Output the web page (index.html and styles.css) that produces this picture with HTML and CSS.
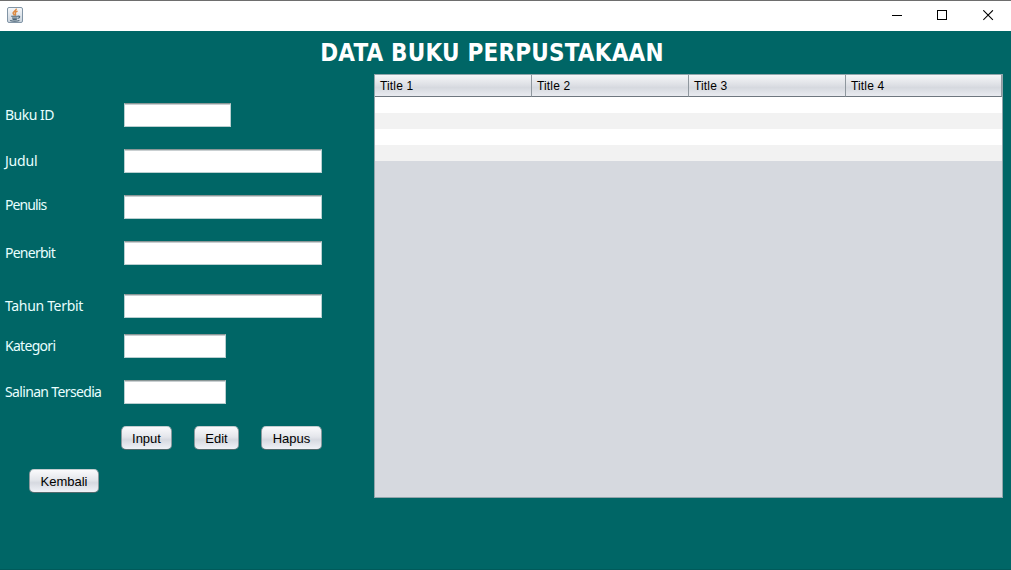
FILE: index.html
```html
<!DOCTYPE html>
<html lang="id">
<head>
<meta charset="utf-8">
<title>Data Buku Perpustakaan</title>
<link rel="stylesheet" href="styles.css">
</head>
<body>
<div class="window">
  <header class="titlebar">
    <svg class="app-icon" width="16" height="16" viewBox="0 0 16 16">
      <defs><linearGradient id="tile" x1="0" y1="0" x2="0" y2="1"><stop offset="0" stop-color="#f6f8fa"/><stop offset="1" stop-color="#c9d3dd"/></linearGradient></defs>
      <rect x=".5" y=".5" width="15" height="15" rx="1.5" fill="url(#tile)" stroke="#8295a6"/>
      <path d="M9.3 1.6C9.8 3.6 5.4 4.5 6.1 6.3 6.4 7.1 7.2 7.5 7.5 8.4M10.6 4.1C8.8 4.7 7.7 5.5 8.4 6.5 8.8 7.2 8.6 7.8 8.1 8.4" fill="none" stroke="#dd8a42" stroke-width="1.5"/>
      <path d="M4.2 9.3H10.8M5 11H10.2M5.6 12.4H9.8M10.8 9.3C13.6 8.4 13.2 11.1 10.6 11.4M3.2 13.4C5 14.4 10.5 14.4 12.4 13.4" fill="none" stroke="#4b6476" stroke-width="1.1"/>
    </svg>
    <div class="controls">
      <svg width="11" height="11" viewBox="0 0 11 11"><path d="M1 5.5H11" stroke="#000"/></svg>
      <svg width="11" height="11" viewBox="0 0 11 11"><rect x=".5" y=".5" width="9" height="9" fill="none" stroke="#000"/></svg>
      <svg width="11" height="11" viewBox="0 0 11 11"><path d="M.3 .3L9.9 9.9M9.9 .3L.3 9.9" stroke="#000" stroke-width="1.1"/></svg>
    </div>
  </header>
  <main class="panel">
    <h1 class="heading">DATA BUKU PERPUSTAKAAN</h1>
    <div class="columns">
      <form class="form">
        <div class="row"><label class="label" for="id">Buku ID</label><input class="field field-id" id="id"></div>
        <div class="row"><label class="label label-title" for="judul">Judul</label><input class="field" id="judul"></div>
        <div class="row"><label class="label label-author" for="penulis">Penulis</label><input class="field" id="penulis"></div>
        <div class="row"><label class="label label-publisher" for="penerbit">Penerbit</label><input class="field" id="penerbit"></div>
        <div class="row row-year"><label class="label label-year" for="tahun">Tahun Terbit</label><input class="field" id="tahun"></div>
        <div class="row row-category"><label class="label label-category" for="kategori">Kategori</label><input class="field field-short" id="kategori"></div>
        <div class="row"><label class="label label-copies" for="salinan">Salinan Tersedia</label><input class="field field-short" id="salinan"></div>
        <div class="actions">
          <button type="button" class="btn btn-input">Input</button>
          <button type="button" class="btn btn-edit">Edit</button>
          <button type="button" class="btn btn-delete">Hapus</button>
        </div>
        <button type="button" class="btn btn-back">Kembali</button>
      </form>
      <div class="table-pane">
        <table class="table">
          <colgroup><col class="col"><col class="col"><col class="col"><col></colgroup>
          <thead><tr><th>Title 1</th><th>Title 2</th><th>Title 3</th><th>Title 4</th></tr></thead>
          <tbody>
            <tr><td></td><td></td><td></td><td></td></tr>
            <tr><td></td><td></td><td></td><td></td></tr>
            <tr><td></td><td></td><td></td><td></td></tr>
            <tr><td></td><td></td><td></td><td></td></tr>
          </tbody>
        </table>
      </div>
    </div>
  </main>
</div>
</body>
</html>
```
FILE: styles.css
```css
* { box-sizing: border-box; }
body { margin: 0; overflow: hidden; }
.window { display: flex; flex-direction: column; width: 1011px; height: 570px; background: #006666; }
.titlebar {
  display: flex; justify-content: space-between; align-items: flex-start;
  height: 31px; padding: 6px 17px 0 7px;
  background: #fff; border-top: 1px solid #6e6e6e;
}
.app-icon { display: block; }
.controls { display: flex; gap: 35px; padding-top: 3px; }
.controls svg { display: block; }
.panel { flex: 1; border-bottom: 1px solid #005a5a; }
.heading {
  height: 43px; margin: 0; padding-right: 27px;
  font: bold 24px/44px "DejaVu Sans Condensed", "DejaVu Sans", sans-serif; font-stretch: condensed;
  letter-spacing: 0.2px;
  text-align: center; color: #fff; white-space: nowrap;
}
.columns { display: flex; }
.form { width: 374px; padding: 29px 0 0 5px; }
.row { display: flex; align-items: center; height: 24px; margin-bottom: 22px; }
.row-year { margin-top: 29px; margin-bottom: 16px; }
.label {
  width: 119px; font: 14px/20px "Noto Sans", sans-serif; letter-spacing: -0.5px;
  color: #e9ffff; white-space: nowrap;
}
.label-title { letter-spacing: -0.2px; }
.label-author { padding-bottom: 4px; letter-spacing: -0.9px; }
.label-publisher { letter-spacing: -0.75px; }
.label-year { letter-spacing: -0.33px; }
.label-category { letter-spacing: -0.7px; }
.label-copies { letter-spacing: -0.65px; }
.field {
  width: 198px; height: 24px; padding: 0 6px;
  font: 12px "Liberation Sans", sans-serif;
  background: #fff; border: 1px solid #b9cfd0; border-top-color: #8b9797; border-radius: 0;
  box-shadow: inset 0 1px 0 #c9cfd1; outline: none;
}
.field-id { width: 107px; }
.field-short { width: 102px; }
.actions { display: flex; padding-left: 116px; }
.btn {
  height: 24px; padding: 1px 0 0;
  font: 13px/20px "Liberation Sans", sans-serif; color: #000;
  background: linear-gradient(#fafafc, #e4e6eb 45%, #d6d9e0 58%, #f0f2f7);
  border: 1px solid #8c9a9e; border-top-color: #c3cccf; border-bottom-color: #536a6d; border-radius: 5px;
}
.btn-input { width: 51px; margin-right: 22px; }
.btn-edit { width: 45px; margin-right: 22px; }
.btn-delete { width: 61px; }
.btn-back { display: block; width: 70px; margin: 19px 0 0 24px; }
.table-pane { width: 629px; height: 424px; background: #d6d9df; border: 1px solid #92a5ab; }
.table { width: 627px; table-layout: fixed; border-collapse: separate; border-spacing: 0; }
.col { width: 157px; }
.table th {
  height: 22px; padding: 0 0 0 5px;
  font: 12px/20px "Liberation Sans", sans-serif; letter-spacing: 0.15px; text-align: left; color: #000;
  background: linear-gradient(#f5f6f8, #dfe1e6 45%, #d6d9df 60%, #e9ebf0);
  border-right: 1px solid #8f979e; border-bottom: 1px solid #6f777f;
}
.table td { height: 16px; padding: 0; background: #fff; }
.table tr:nth-child(even) td { background: #f2f2f2; }
```
